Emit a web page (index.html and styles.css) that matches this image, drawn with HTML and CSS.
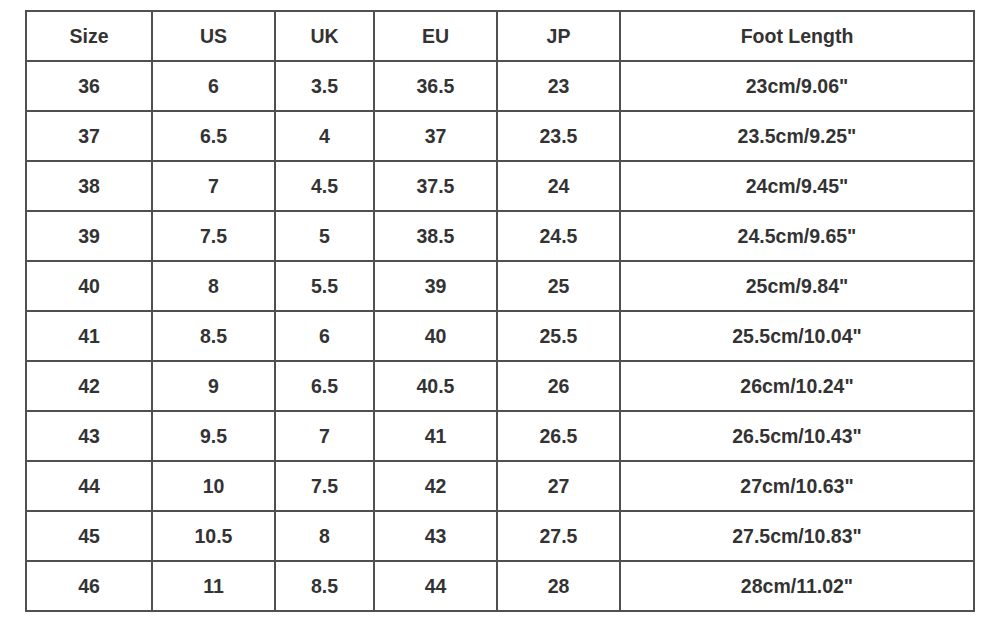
FILE: index.html
```html
<!DOCTYPE html>
<html>
<head>
<meta charset="utf-8">
<link rel="stylesheet" href="styles.css">
</head>
<body>
<div class="chart">
  <div class="cell">Size</div><div class="cell">US</div><div class="cell">UK</div><div class="cell">EU</div><div class="cell">JP</div><div class="cell">Foot Length</div>
  <div class="cell">36</div><div class="cell">6</div><div class="cell">3.5</div><div class="cell">36.5</div><div class="cell">23</div><div class="cell">23cm/9.06"</div>
  <div class="cell">37</div><div class="cell">6.5</div><div class="cell">4</div><div class="cell">37</div><div class="cell">23.5</div><div class="cell">23.5cm/9.25"</div>
  <div class="cell">38</div><div class="cell">7</div><div class="cell">4.5</div><div class="cell">37.5</div><div class="cell">24</div><div class="cell">24cm/9.45"</div>
  <div class="cell">39</div><div class="cell">7.5</div><div class="cell">5</div><div class="cell">38.5</div><div class="cell">24.5</div><div class="cell">24.5cm/9.65"</div>
  <div class="cell">40</div><div class="cell">8</div><div class="cell">5.5</div><div class="cell">39</div><div class="cell">25</div><div class="cell">25cm/9.84"</div>
  <div class="cell">41</div><div class="cell">8.5</div><div class="cell">6</div><div class="cell">40</div><div class="cell">25.5</div><div class="cell">25.5cm/10.04"</div>
  <div class="cell">42</div><div class="cell">9</div><div class="cell">6.5</div><div class="cell">40.5</div><div class="cell">26</div><div class="cell">26cm/10.24"</div>
  <div class="cell">43</div><div class="cell">9.5</div><div class="cell">7</div><div class="cell">41</div><div class="cell">26.5</div><div class="cell">26.5cm/10.43"</div>
  <div class="cell">44</div><div class="cell">10</div><div class="cell">7.5</div><div class="cell">42</div><div class="cell">27</div><div class="cell">27cm/10.63"</div>
  <div class="cell">45</div><div class="cell">10.5</div><div class="cell">8</div><div class="cell">43</div><div class="cell">27.5</div><div class="cell">27.5cm/10.83"</div>
  <div class="cell">46</div><div class="cell">11</div><div class="cell">8.5</div><div class="cell">44</div><div class="cell">28</div><div class="cell">28cm/11.02"</div>
</div>
</body>
</html>
```

FILE: styles.css
```css
html, body {
  margin: 0;
  padding: 0;
  background: #ffffff;
}
body {
  padding: 10px 0 0 25px;
}
.chart {
  display: inline-grid;
  grid-template-columns: 124px 121px 97px 121px 121px 352px;
  grid-auto-rows: 48px;
  gap: 2px;
  padding: 2px;
  background: #505050;
  font-family: "Liberation Sans", Arial, sans-serif;
  font-weight: bold;
  font-size: 19.5px;
  color: #333333;
}
.cell {
  background: #ffffff;
  display: flex;
  align-items: center;
  justify-content: center;
}
```
